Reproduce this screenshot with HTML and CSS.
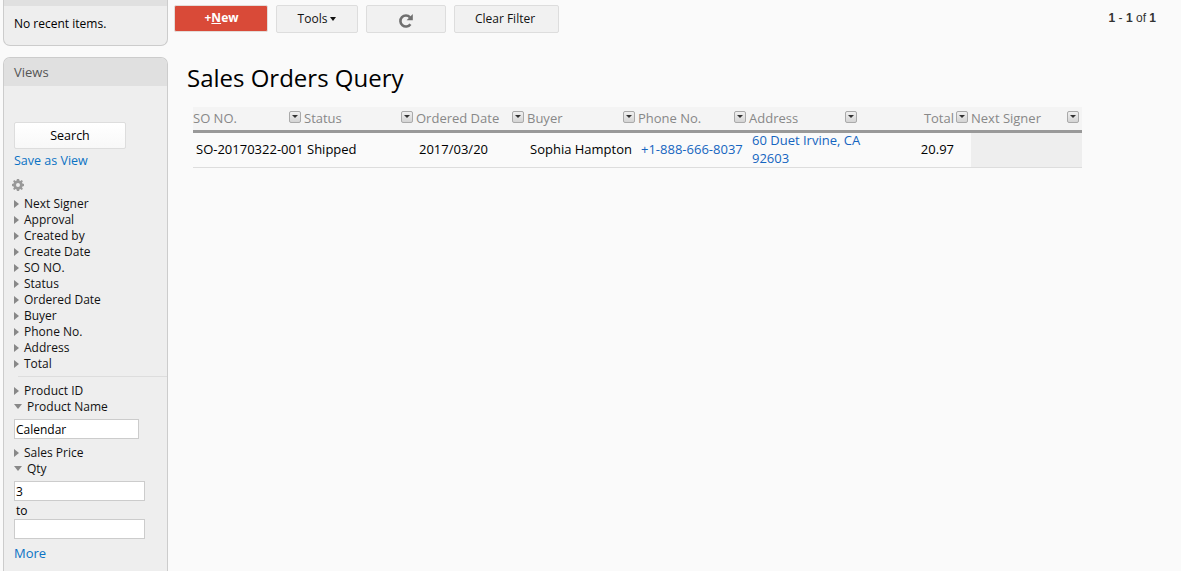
FILE: index.html
```html
<!DOCTYPE html>
<html>
<head>
<meta charset="utf-8">
<title>Sales Orders Query</title>
<link rel="stylesheet" href="styles.css">
</head>
<body>
<aside class="sidebar">
  <section class="panel recent">
    <div class="panel-head recent-head"></div>
    <p class="recent-text">No recent items.</p>
  </section>
  <section class="panel views">
    <div class="panel-head">Views</div>
    <div class="views-body">
      <button class="search-btn">Search</button>
      <a class="link save-view">Save as View</a>
      <svg class="gear" width="12" height="12" viewBox="0 0 12 12"><path fill="#999" fill-rule="evenodd" d="M4.9 0h2.2l.3 1.6 1 .4L9.800 1.100l1.100 1.100L10 3.600l.4 1 1.600.3v2.200l-1.600.3-.4 1 .9 1.400-1.100 1.100L8.400 10l-1 .4-.3 1.600H4.900l-.3-1.600-1-.4-1.400.9-1.100-1.100L2 8.400l-.4-1L0 7.100V4.900l1.600-.3.4-1-.9-1.400 1.100-1.100L3.600 2l1-.4zM6 4a2 2 0 1 0 0 4 2 2 0 0 0 0-4z"/></svg>
      <ul class="filters">
        <li class="closed">Next Signer</li>
        <li class="closed">Approval</li>
        <li class="closed">Created by</li>
        <li class="closed">Create Date</li>
        <li class="closed">SO NO.</li>
        <li class="closed">Status</li>
        <li class="closed">Ordered Date</li>
        <li class="closed">Buyer</li>
        <li class="closed">Phone No.</li>
        <li class="closed">Address</li>
        <li class="closed">Total</li>
      </ul>
      <hr class="divider">
      <ul class="filters">
        <li class="closed">Product ID</li>
        <li class="open">Product Name</li>
      </ul>
      <input class="field name-field" type="text" value="Calendar">
      <ul class="filters">
        <li class="closed">Sales Price</li>
        <li class="open">Qty</li>
      </ul>
      <input class="field qty-field" type="text" value="3">
      <div class="to">to</div>
      <input class="field qty-field" type="text">
      <a class="link more">More</a>
    </div>
  </section>
</aside>
<main class="content">
  <div class="toolbar">
    <button class="btn btn-new">+<u>N</u>ew</button>
    <button class="btn btn-tools">Tools<span class="caret"></span></button>
    <button class="btn btn-refresh" aria-label="Refresh"><svg width="16" height="16" viewBox="0 0 16 16"><path fill="none" stroke="#6f6f6f" stroke-width="2.600" d="M12.400 11.200A5.500 5.500 0 1 1 12 4.300"/><path fill="#6f6f6f" d="M14.800 1v6.200H8.600z"/></svg></button>
    <button class="btn btn-clear">Clear Filter</button>
    <div class="pager"><b>1</b> - <b>1</b> of <b>1</b></div>
  </div>
  <h1 class="title">Sales Orders Query</h1>
  <table class="grid">
    <thead>
      <tr>
        <th><span>SO NO.</span><i class="menu"></i></th>
        <th><span>Status</span><i class="menu"></i></th>
        <th><span>Ordered Date</span><i class="menu"></i></th>
        <th><span>Buyer</span><i class="menu"></i></th>
        <th><span>Phone No.</span><i class="menu"></i></th>
        <th><span>Address</span><i class="menu"></i></th>
        <th class="th-right"><span>Total</span><i class="menu"></i></th>
        <th><span>Next Signer</span><i class="menu"></i></th>
      </tr>
    </thead>
    <tbody>
      <tr>
        <td>SO-20170322-001</td>
        <td>Shipped</td>
        <td>2017/03/20</td>
        <td>Sophia Hampton</td>
        <td><a class="link dark">+1-888-666-8037</a></td>
        <td class="addr-cell"><a class="link dark addr">60 Duet Irvine, CA 92603</a></td>
        <td class="num">20.97</td>
        <td class="empty"></td>
      </tr>
    </tbody>
  </table>
</main>
</body>
</html>
```
FILE: styles.css
```css
* { box-sizing: border-box; }
html, body { height: 100%; }
body {
  margin: 0;
  height: 571px;
  overflow: hidden;
  display: flex;
  background: #fafafa;
  color: #000;
  font: 12px/16px "Open Sans", sans-serif;
}
.sidebar {
  width: 165px;
  margin-left: 3px;
  flex: none;
  display: flex;
  flex-direction: column;
  gap: 11px;
}
.panel {
  background: #eee;
  border: 1px solid #ccc;
  border-radius: 7px;
}
.recent {
  height: 46px;
  border-top: 0;
  border-top-left-radius: 0;
  border-top-right-radius: 0;
}
.panel-head {
  background: #e0e0e0;
  height: 28px;
  line-height: 29px;
  padding-left: 10px;
  font-size: 13px;
  color: #555;
  border-radius: 6px 6px 0 0;
}
.recent-head { height: 6px; border-radius: 0; }
.recent-text { margin: 10px 0 0 10px; font-size: 12px; line-height: 16px; }
.views {
  flex: 1;
  border-bottom: 0;
  border-radius: 7px 7px 0 0;
}
.views-body { padding: 36px 0 0 10px; }
.search-btn {
  display: block;
  width: 112px;
  height: 27px;
  padding: 0;
  background: linear-gradient(#fff, #f8f8f8);
  border: 1px solid #ddd;
  border-radius: 2px;
  font: 12.500px "Open Sans", sans-serif;
  color: #000;
}
.link { color: #0a72c4; }
.link.dark { color: #1565c0; }
.save-view { display: block; margin-top: 3px; line-height: 18px; font-size: 12.500px; }
.gear { display: block; margin: 9px 0 0 -2px; }
.filters { list-style: none; margin: 0; padding: 0; }
.gear + .filters { margin-top: 5px; }
.filters li {
  position: relative;
  height: 16px;
  padding-left: 10px;
  font-size: 12px;
  color: #111;
}
.filters li::before {
  content: "";
  position: absolute;
  width: 0;
  height: 0;
}
.filters .closed::before {
  left: 0;
  top: 4px;
  border-style: solid;
  border-width: 4px 0 4px 5px;
  border-color: transparent transparent transparent #888;
}
.filters .open { padding-left: 13px; }
.filters .open::before {
  left: 0;
  top: 5px;
  border-style: solid;
  border-width: 5px 4px 0 4px;
  border-color: #888 transparent transparent transparent;
}
.divider {
  margin: 4px 0 6px 4px;
  border: 0;
  border-top: 1px solid #ddd;
}
.field {
  display: block;
  height: 20px;
  padding: 0 1px;
  background: #fff;
  border: 1px solid #ccc;
  border-radius: 0;
  font: 12px "Open Sans", sans-serif;
  color: #000;
}
.name-field { width: 125px; margin: 4px 0 6px; }
.qty-field { width: 131px; }
.filters + .qty-field { margin-top: 4px; }
.to { padding: 1px 0 0 2px; height: 18px; line-height: 18px; }
.more { display: block; margin-top: 5px; font-size: 13px; line-height: 18px; }
.content { flex: 1; padding-left: 6px; min-width: 0; }
.toolbar {
  display: flex;
  align-items: flex-start;
  gap: 8px;
  padding-top: 5px;
  height: 45px;
}
.btn {
  height: 28px;
  padding: 0 0 2px;
  border: 1px solid #ddd;
  border-radius: 2px;
  background: #f1f1f1;
  font: 12px "Open Sans", sans-serif;
  color: #111;
}
.btn-new {
  width: 94px;
  height: 27px;
  padding-left: 1px;
  background: #d94a38;
  border-color: #e3dcd8;
  color: #fff;
  font-weight: 700;
}
.btn-tools { width: 82px; }
.btn-refresh { width: 80px; padding: 0; }
.btn-refresh svg { display: block; margin: 3px auto 0; }
.btn-clear { width: 105px; padding-right: 3px; }
.caret {
  display: inline-block;
  margin-left: 3px;
  vertical-align: 2px;
  border-style: solid;
  border-width: 4px 3.500px 0;
  border-color: #111 transparent transparent;
}
.pager {
  margin-left: auto;
  margin-right: 25px;
  margin-top: 5px;
  font: 12px/16px "Liberation Sans", sans-serif;
  color: #333;
}
.title {
  margin: 0 0 0 13px;
  font: 400 24px/36px "Open Sans", sans-serif;
  color: #000;
  height: 62px;
  padding-top: 15px;
}
.grid {
  margin-left: 19px;
  width: 889px;
  table-layout: fixed;
  border-collapse: collapse;
  border-spacing: 0;
}
.grid th {
  position: relative;
  width: 111px;
  height: 24px;
  padding: 0;
  background: #f4f4f4;
  border-bottom: 3px solid #999;
  text-align: left;
  font-weight: 400;
  font-size: 13px;
  color: #888;
}
.grid th:nth-child(2) { width: 112px; }
.grid th span { position: relative; top: 0; }
.grid .th-right { text-align: right; padding-right: 17px; }
.menu {
  position: absolute;
  right: 3px;
  top: 4px;
  width: 12px;
  height: 12px;
  background: linear-gradient(#f0f0f0, #d4d4d4);
  border: 1px solid #aaa;
  border-radius: 2px;
}
.menu::after {
  content: "";
  position: absolute;
  left: 2px;
  top: 3px;
  border-style: solid;
  border-width: 3px 3px 0;
  border-color: #333 transparent transparent;
}
.grid td {
  height: 35px;
  padding: 0 3px 2px;
  border-bottom: 1px solid #ddd;
  font-size: 13px;
  line-height: 18px;
  vertical-align: middle;
}
.grid td:first-child { white-space: nowrap; }
.grid .addr-cell { padding-right: 0; }
.addr { display: block; width: 112px; margin: -2px 0; }
.grid .num { text-align: right; padding-right: 17px; }
.grid .empty { background: #eee; }
```
